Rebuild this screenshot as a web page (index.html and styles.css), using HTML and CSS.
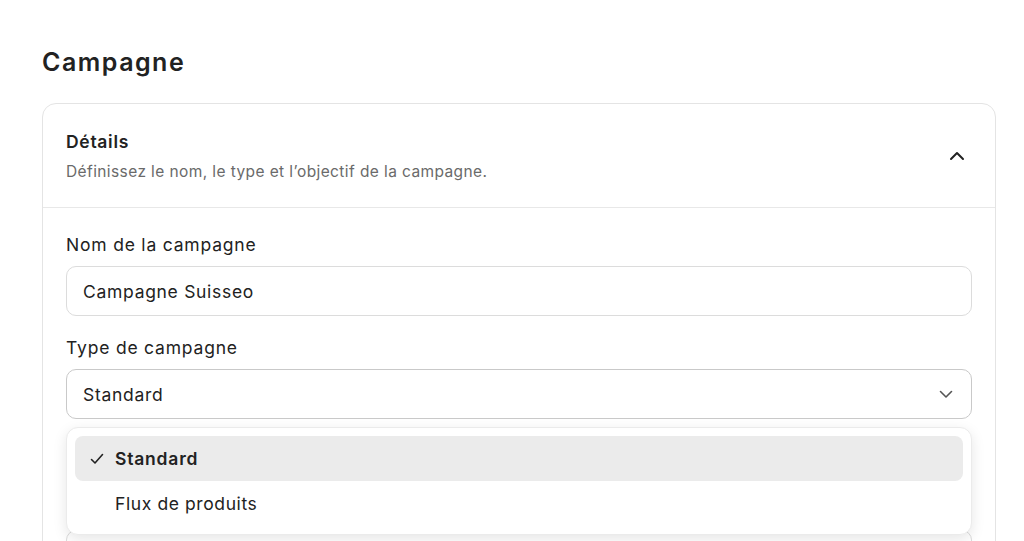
FILE: index.html
```html
<!DOCTYPE html>
<html lang="fr">
<head>
<meta charset="utf-8">
<title>Campagne</title>
<link rel="stylesheet" href="styles.css">
</head>
<body>
<main class="page">
  <h1 class="page-title">Campagne</h1>
  <section class="card">
    <header class="card-header">
      <div class="card-heading">
        <h2 class="card-title">Détails</h2>
        <p class="card-subtitle">Définissez le nom, le type et l’objectif de la campagne.</p>
      </div>
      <svg class="chevron-up" width="18" height="18" viewBox="0 0 18 18" fill="none" stroke="#222" stroke-width="2" stroke-linecap="round" stroke-linejoin="round"><path d="M3 12l6-6 6 6"/></svg>
    </header>
    <div class="card-body">
      <div class="field">
        <label class="field-label">Nom de la campagne</label>
        <div class="input">Campagne Suisseo</div>
      </div>
      <div class="field">
        <label class="field-label">Type de campagne</label>
        <div class="select-wrap">
          <div class="input select">
            <span>Standard</span>
            <svg class="chevron-down" width="16" height="16" viewBox="0 0 16 16" fill="none" stroke="#555" stroke-width="1.6" stroke-linecap="round" stroke-linejoin="round"><path d="M2.5 5.5L8 11l5.5-5.5"/></svg>
          </div>
          <ul class="listbox">
            <li class="option selected">
              <svg class="check" width="14" height="14" viewBox="0 0 14 14" fill="none" stroke="#222" stroke-width="1.6" stroke-linecap="round" stroke-linejoin="round"><path d="M1.5 7.5l3.5 3.5 7.5-8.5"/></svg>
              <span>Standard</span>
            </li>
            <li class="option"><span>Flux de produits</span></li>
          </ul>
        </div>
      </div>
      <div class="input next-input"></div>
    </div>
  </section>
</main>
</body>
</html>
```
FILE: styles.css
```css
* { box-sizing: border-box; }
html, body { margin: 0; padding: 0; background: #fff; }
body {
  font-family: Inter, "Noto Sans", "Liberation Sans", sans-serif;
  color: #222;
  overflow: hidden;
  height: 541px;
}
.page {
  padding: 46px 28px 0 42px;
}
.page-title {
  margin: 0;
  font-size: 25px;
  line-height: 32px;
  font-weight: 600;
  color: #222;
  letter-spacing: 1.5px;
}
.card {
  margin-top: 25px;
  border: 1px solid #e4e4e4;
  border-radius: 14px;
  min-height: 600px;
}
.card-header {
  display: flex;
  align-items: center;
  justify-content: space-between;
  padding: 26px 29px 25px 23px;
  border-bottom: 1px solid #e8e8e8;
}
.card-title {
  margin: 0;
  font-size: 17.5px;
  line-height: 24px;
  font-weight: 600;
  letter-spacing: 0.7px;
}
.card-subtitle {
  margin: 8px 0 0;
  font-size: 15.5px;
  line-height: 20px;
  color: #6a6a6a;
  letter-spacing: 0.4px;
}
.card-body {
  padding: 25px 23px 0 23px;
  display: flex;
  flex-direction: column;
  gap: 20px;
}
.field {
  display: flex;
  flex-direction: column;
}
.field-label {
  font-size: 17.5px;
  line-height: 24px;
  color: #222;
  margin-bottom: 9px;
  letter-spacing: 0.8px;
}
.input {
  height: 50px;
  border: 1px solid #dcdcdc;
  border-radius: 10px;
  padding: 0 16px;
  display: flex;
  align-items: center;
  font-size: 17.5px;
  color: #222;
  letter-spacing: 0.7px;
}
.select {
  border-color: #c9c9c9;
  justify-content: space-between;
  padding-right: 17px;
}
.select-wrap {
  position: relative;
}
.listbox {
  position: absolute;
  left: 0;
  right: 0;
  top: calc(100% + 8px);
  margin: 0;
  padding: 8px;
  list-style: none;
  background: #fff;
  border: 1px solid #ebebeb;
  border-radius: 12px;
  box-shadow: 0 4px 14px rgba(0, 0, 0, 0.10);
  z-index: 2;
}
.option {
  height: 45px;
  display: flex;
  align-items: center;
  gap: 11px;
  padding-left: 40px;
  font-size: 17.5px;
  color: #222;
  border-radius: 8px;
  letter-spacing: 0.6px;
}
.option.selected {
  background: #ebebeb;
  font-weight: 600;
  padding-left: 15px;
  letter-spacing: 0.8px;
}
.next-input {
  margin-top: 91px;
}
```
